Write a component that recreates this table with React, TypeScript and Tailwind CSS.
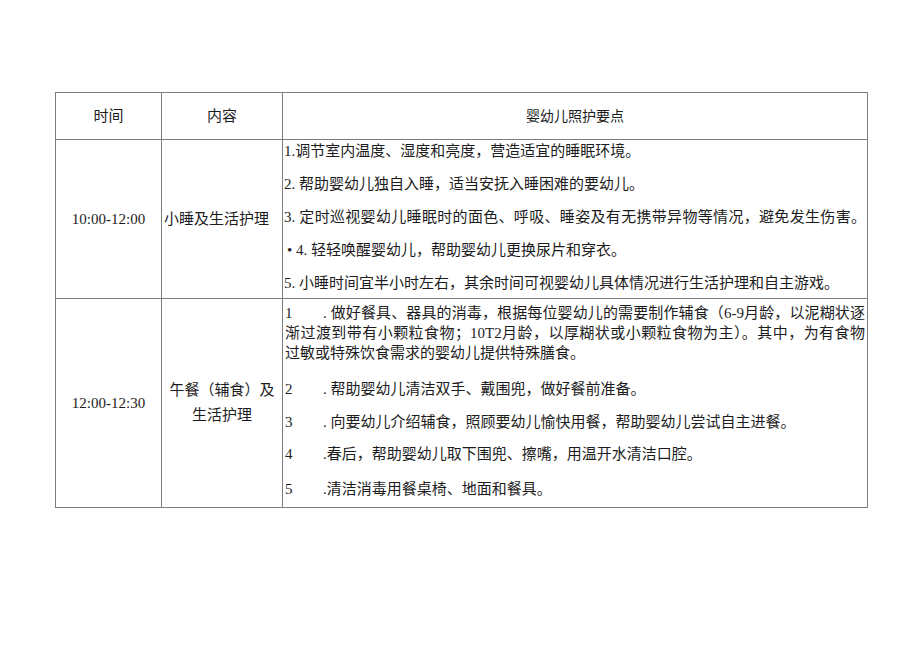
const FONT = { fontFamily: '"Liberation Serif", "Noto Sans CJK SC", serif' };

const cell = "border border-[#7d7d7d] p-0 align-middle";
const just = "text-justify [text-align-last:justify]";

function NumLine({ n, children, className = "" }: { n: string; children: React.ReactNode; className?: string }) {
  return (
    <div className={`flex leading-[20px] ${className}`}>
      <span className="w-[38px] shrink-0">{n}</span>
      <span className="flex-1 whitespace-nowrap">{children}</span>
    </div>
  );
}

export default function App() {
  return (
    <div className="w-[920px] h-[651px] bg-white text-[#1c1c1c] text-[15px]" style={FONT}>
      <div className="pt-[92px] pl-[55px]">
        <table className="table-fixed border-collapse w-[812px]">
          <colgroup>
            <col className="w-[106px]" />
            <col className="w-[121px]" />
            <col className="w-[585px]" />
          </colgroup>
          <tbody>
            <tr className="h-[47px]">
              <td className={`${cell} text-center text-[15px]`}>时间</td>
              <td className={`${cell} text-center text-[15px]`}>内容</td>
              <td className={`${cell} text-center text-[14px]`}>婴幼儿照护要点</td>
            </tr>
            <tr className="h-[159px]">
              <td className={`${cell} text-center`}>10:00-12:00</td>
              <td className={`${cell} pl-[2px] whitespace-nowrap`}>小睡及生活护理</td>
              <td className={`${cell} align-top px-[1px]`}>
                <div className="flex flex-col gap-[11px] leading-[22px] whitespace-nowrap">
                  <div>1.调节室内温度、湿度和亮度，营造适宜的睡眠环境。</div>
                  <div>2. 帮助婴幼儿独自入睡，适当安抚入睡困难的要幼儿。</div>
                  <div className={just}>3. 定时巡视婴幼儿睡眠时的面色、呼吸、睡姿及有无携带异物等情况，避免发生伤害。</div>
                  <div className="pl-[3px]">• 4. 轻轻唤醒婴幼儿，帮助婴幼儿更换尿片和穿衣。</div>
                  <div>5. 小睡时间宜半小时左右，其余时间可视婴幼儿具体情况进行生活护理和自主游戏。</div>
                </div>
              </td>
            </tr>
            <tr className="h-[209px]">
              <td className={`${cell} text-center`}>12:00-12:30</td>
              <td className={`${cell} text-center leading-[25px]`}>
                <div>午餐（辅食）及</div>
                <div>生活护理</div>
              </td>
              <td className={`${cell} align-top px-[2px] pt-[4px]`}>
                <div className="leading-[20px]">
                  <div className="flex">
                    <span className="w-[38px] shrink-0">1</span>
                    <span className={`flex-1 ${just}`}>. 做好餐具、器具的消毒，根据每位婴幼儿的需要制作辅食（6-9月龄，以泥糊状逐</span>
                  </div>
                  <div className={just}>渐过渡到带有小颗粒食物；10T2月龄，以厚糊状或小颗粒食物为主）。其中，为有食物</div>
                  <div className="whitespace-nowrap">过敏或特殊饮食需求的婴幼儿提供特殊膳食。</div>
                </div>
                <NumLine n="2" className="mt-[16px]">. 帮助婴幼儿清洁双手、戴围兜，做好餐前准备。</NumLine>
                <NumLine n="3" className="mt-[13px]">. 向要幼儿介绍辅食，照顾要幼儿愉快用餐，帮助婴幼儿尝试自主进餐。</NumLine>
                <NumLine n="4" className="mt-[12px]">.春后，帮助婴幼儿取下围兜、擦嘴，用温开水清洁口腔。</NumLine>
                <NumLine n="5" className="mt-[15px]">.清洁消毒用餐桌椅、地面和餐具。</NumLine>
              </td>
            </tr>
          </tbody>
        </table>
      </div>
    </div>
  );
}
